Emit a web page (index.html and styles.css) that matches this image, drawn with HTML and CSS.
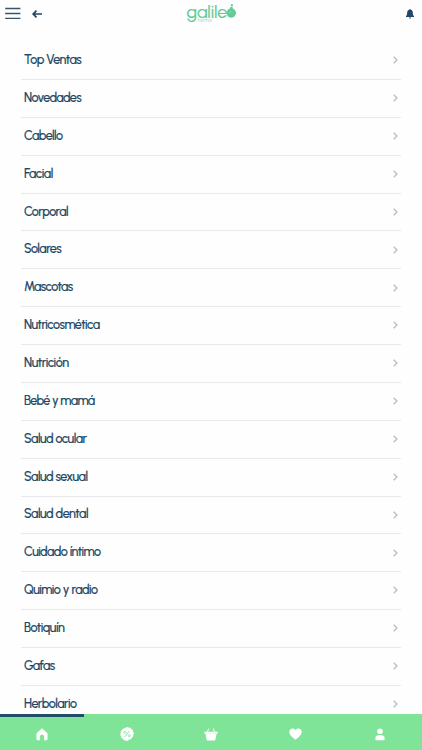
FILE: index.html
```
<!DOCTYPE html>
<html lang="es">
<head>
<meta charset="utf-8">
<title>Galileo farma</title>
<link rel="stylesheet" href="styles.css">
</head>
<body>
<div class="app">
<header class="header">
  <div class="left">
    <svg width="16" height="12" viewBox="0 0 16 12"><path d="M.2 1.500h15.200M.2 6.500h15.200M.2 11.300h15.200" fill="none" stroke="#38546c" stroke-width="1.300"/></svg>
    <svg class="back" width="10" height="8" viewBox="0 0 10 8"><path d="M4.500.7 1.200 4l3.300 3.300M1.200 4H10" fill="none" stroke="#23445f" stroke-width="1.700"/></svg>
  </div>
  <div class="logo">
    <div class="word"><span>galile</span><svg width="11" height="15" viewBox="0 0 11 15"><circle cx="5.3" cy="9" r="4.7" fill="#62cc97"/><path d="M4.200 2.800h2.400v3H4.200z" fill="#62cc97"/><circle cx="5.9" cy="1.2" r="1.1" fill="#62cc97"/><circle cx="4.2" cy="8.3" r=".9" fill="#91dfb6"/></svg></div>
    <div class="sub">farma</div>
  </div>
  <svg class="bell" width="8" height="10" viewBox="0 0 8 10"><path d="M4 0c.5 0 .7.3.7.8C6 1.1 6.8 2.2 6.8 3.6c0 2 .4 2.800 1.200 3.700v.7H0v-.7c.8-.9 1.200-1.700 1.200-3.700C1.200 2.200 2 1.100 3.300.8 3.300.3 3.500 0 4 0zM2.900 8.600h2.200c0 1.500-2.200 1.500-2.200 0z" fill="#244766"/></svg>
</header>
<main class="list" id="list"></main>
<nav class="tabs">
  <a class="tab active"><svg width="12" height="13" viewBox="0 0 12 13"><path d="M6 .3 11.200 5c.2.200.3.500.3.800V11c0 .8-.4 1.200-1.200 1.200H8.100V8.600c0-2.500-4.200-2.500-4.200 0v3.600H1.700C.9 12.200.5 11.800.5 11V5.800c0-.3.100-.6.300-.8z" fill="#fff"/></svg></a>
  <a class="tab"><svg width="14" height="14" viewBox="0 0 14 14"><path d="M7 0l1.600.6 1.700.1 1.100 1.300 1.400 1 .3 1.700.7 1.600-.5 1.600-.2 1.700-1.200 1.200-1 1.400-1.700.4L7.600 14l-1.700-.5-1.700-.2L3 12l-1.500-1-.4-1.700L.2 7.700l.5-1.600.1-1.700L2 3.100l1-1.400 1.700-.4z" fill="#fff"/><path d="M9.200 4.200 4.900 9.800" stroke="#80e798" stroke-width="1"/><circle cx="4.900" cy="5.400" r="1.100" fill="none" stroke="#80e798" stroke-width=".8"/><circle cx="9.200" cy="8.700" r="1.100" fill="none" stroke="#80e798" stroke-width=".8"/></svg></a>
  <a class="tab"><svg width="14" height="13" viewBox="0 0 14 13"><path d="M4.700.5 3.400 4M9.300.5l1.300 3.500" stroke="#fff" stroke-width=".9"/><path d="M.8 3.700h12.400c.3 0 .4.200.4.400v1.200c0 .3-.2.400-.4.400H.8c-.3 0-.4-.2-.4-.4V4.100c0-.2.200-.4.400-.4zM1.500 6h11l-1 5.300c-.1.800-.6 1.200-1.400 1.200H3.900c-.8 0-1.300-.4-1.400-1.200z" fill="#fff"/></svg></a>
  <a class="tab"><svg width="13" height="12" viewBox="0 0 13 12"><path d="M6.500 11.700C3.500 9.200.3 6.900.3 3.700.3.500 4.500-.9 6.500 2c2-2.900 6.200-1.500 6.200 1.700 0 3.200-3.200 5.500-6.200 8z" fill="#fff"/></svg></a>
  <a class="tab"><svg width="10" height="13" viewBox="0 0 10 13"><circle cx="5" cy="3.200" r="2.800" fill="#fff"/><path d="M.4 11V9.800C.4 7.900 2.400 7 5 7s4.600.9 4.600 2.800V11c0 .9-.4 1.300-1.200 1.300H1.600C.8 12.300.4 11.900.4 11z" fill="#fff"/></svg></a>
</nav>
</div>
<script src="list.js"></script>
</body>
</html>
```
FILE: styles.css
```
* { box-sizing: border-box; }
body { margin: 0; background: #fefefe; font-family: Urbanist, Lato, "Liberation Sans", sans-serif; }
svg { display: block; flex: none; }
.app { height: 750px; display: flex; flex-direction: column; overflow: hidden; }
.header { height: 42.2px; flex: none; display: grid; grid-template-columns: 1fr 50px 1fr; align-items: start; padding: 0 8px 0 5px; }
.left { display: flex; align-items: center; gap: 11px; padding-top: 7px; }
.back { margin-top: 1px; }
.logo { padding-top: 4px; color: #5fca95; margin-left: 2px; }
.word { display: flex; height: 14px; font-size: 18px; line-height: 16px; white-space: nowrap; -webkit-text-stroke: .2px #5fca95; }
.word span { width: 39px; letter-spacing: -0.1px; }
.sub { font-size: 5px; line-height: 5px; margin: 0 0 0 11px; letter-spacing: .1px; opacity: .75; }
.bell { justify-self: end; margin-top: 9px; }
.list { flex: 1; min-height: 0; overflow: hidden; padding: 0 21px; }
.row { height: 37.87px; display: flex; align-items: center; justify-content: space-between; padding: 0 3px; border-bottom: 1px solid #e8e9eb; color: #204763; }
.label { font-size: 12.5px; line-height: 16px; font-weight: 500; white-space: nowrap; margin-top: -1px; -webkit-text-stroke: .2px #204763; }
.chevron { margin: -0.5px 0.5px 0 0; }
.tabs { height: 36px; flex: none; background: #80e498; display: grid; grid-template-columns: repeat(5, 1fr); }
.tab { display: flex; align-items: center; justify-content: center; padding-top: 4px; position: relative; }
.active::before { content: ""; position: absolute; left: 0; right: 0; top: 0; height: 2.5px; background: #214d69; }
```
FILE: list.js
```
// Each entry is a category name and the width of its label in pixels.
const categories = [
  ["Top Ventas", 57], ["Novedades", 57], ["Cabello", 38.500], ["Facial", 29],
  ["Corporal", 44], ["Solares", 37], ["Mascotas", 48.500], ["Nutricosmética", 75.500],
  ["Nutrición", 44.500], ["Bebé y mamá", 70.500], ["Salud ocular", 62.500],
  ["Salud sexual", 63.500], ["Salud dental", 64], ["Cuidado íntimo", 76.500],
  ["Quimio y radio", 73.500], ["Botiquín", 40.500], ["Gafas", 30.500], ["Herbolario", 52.500]
];
const list = document.getElementById("list");
for (const [name, width] of categories) {
  const row = document.createElement("div");
  row.className = "row";
  row.innerHTML = '<span class="label"></span><svg class="chevron" width="5" height="8" viewBox="0 0 5 8"><path d="M.7.8 3.900 4 .7 7.200" fill="none" stroke="#b9bfc8" stroke-width="1.400"/></svg>';
  const label = row.firstChild;
  label.textContent = name;
  list.append(row);
  const spacing = (width - label.getBoundingClientRect().width) / name.length;
  label.style.letterSpacing = spacing + "px";
}
```
